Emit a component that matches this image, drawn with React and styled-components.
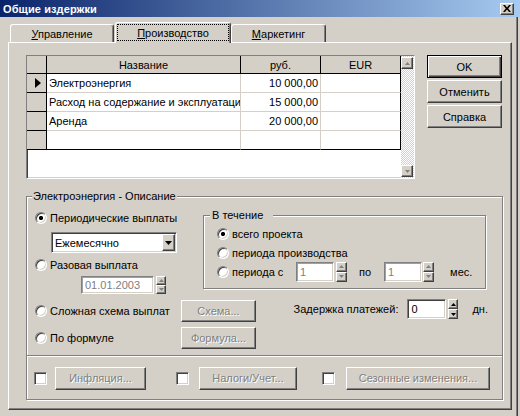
import React from "react";
import styled, { createGlobalStyle, css } from "styled-components";

const FACE = "#D4D0C8";

const GlobalStyle = createGlobalStyle`
  *, *::before, *::after { box-sizing: border-box; }
  html, body { margin: 0; padding: 0; background: ${FACE}; }
  body {
    font-family: "Liberation Sans", Arial, sans-serif;
    font-size: 11px;
    color: #000;
  }
`;

const raised = css`
  border: 1px solid;
  border-color: #fff #404040 #404040 #fff;
  box-shadow: inset -1px -1px 0 #808080;
  background: ${FACE};
`;

const sunken = css`
  border: 1px solid;
  border-color: #808080 #fff #fff #808080;
  box-shadow: inset 1px 1px 0 #404040, inset -1px -1px 0 ${FACE};
`;

const etched = css`
  border: 1px solid #808080;
  box-shadow: inset 1px 1px 0 #fff, 1px 1px 0 #fff;
`;

const Screen = styled.div`
  width: 520px;
  height: 416px;
  overflow: hidden;
  background: ${FACE};
`;

const TitleBar = styled.div`
  height: 17px;
  display: flex;
  align-items: center;
  justify-content: space-between;
  padding: 0 6px 0 3px;
  background: linear-gradient(to right, #0a246a, #a6caf0);
`;

const TitleText = styled.span`
  color: #fff;
  font-weight: bold;
  font-size: 11px;
  letter-spacing: 0.1px;
`;

const CloseButton = styled.div`
  width: 14px;
  height: 12px;
  ${raised};
  display: flex;
  align-items: center;
  justify-content: center;
`;

const WindowBody = styled.div`
  width: 518px;
  height: 399px;
  border-right: 1px solid #404040;
  box-shadow: inset -1px 0 0 #808080;
  padding: 0 5px 0 8px;
`;

const TabStrip = styled.div`
  height: 25px;
  display: flex;
  align-items: flex-end;
`;

const Tab = styled.div`
  flex: none;
  position: relative;
  width: ${(p) => p.$w}px;
  margin-left: ${(p) => p.$ml || 0}px;
  background: ${FACE};
  border: 1px solid;
  border-bottom: none;
  border-color: #fff #404040 #fff #fff;
  border-radius: 3px 3px 0 0;
  box-shadow: inset -1px 0 0 #808080;
  text-align: center;
  line-height: 13px;
  ${(p) =>
    p.$active
      ? css`
          height: 21px;
          margin-bottom: -1px;
          z-index: 1;
          padding: 1px 1px 2px 1px;
          display: flex;
        `
      : css`
          height: 18px;
          padding-top: 3px;
        `}
`;

const FocusRect = styled.div`
  flex: 1;
  border: 1px dotted #000;
  padding-top: 2px;
  text-align: center;
`;

const TabPage = styled.div`
  width: 504px;
  height: 368px;
  border: 1px solid;
  border-color: #fff #404040 #404040 #fff;
  box-shadow: inset -1px -1px 0 #808080;
  padding: 12px 0 0 17px;
  display: flex;
  flex-direction: column;
`;

const TopRow = styled.div`
  display: flex;
  gap: 12px;
  height: 124px;
`;

const GridFrame = styled.div`
  width: 389px;
  height: 124px;
  ${sunken};
  background: #fff;
  display: flex;
`;

const Cells = styled.div`
  width: 374px;
  display: grid;
  grid-template-columns: 20px 194px 80px 80px;
  grid-template-rows: 18px repeat(4, 19px);
  align-content: start;
`;

const HeadCell = styled.div`
  background: ${FACE};
  border-right: 1px solid #000;
  border-bottom: 1px solid #000;
  display: flex;
  align-items: center;
  justify-content: center;
  padding-top: 1px;
`;

const IndicatorCell = styled.div`
  background: ${FACE};
  border-right: 1px solid #000;
  border-bottom: 1px solid #000;
  display: flex;
  align-items: center;
  padding-left: 8px;
`;

const DataCell = styled.div`
  background: #fff;
  border-right: 1px solid ${(p) => (p.$lastCol ? "#000" : FACE)};
  border-bottom: 1px solid ${(p) => (p.$lastRow ? "#000" : FACE)};
  display: flex;
  align-items: center;
  justify-content: ${(p) => (p.$right ? "flex-end" : "flex-start")};
  padding: 0 2px;
  white-space: nowrap;
  overflow: hidden;
`;

const ScrollBar = styled.div`
  width: 13px;
  padding: 1px 1px 1px 0;
  display: flex;
  flex-direction: column;
  justify-content: space-between;
  background: repeating-conic-gradient(#fff 0 25%, ${FACE} 0 50%) 0 0 / 2px 2px;
`;

const ScrollButton = styled.div`
  width: 12px;
  height: 12px;
  ${raised};
  display: flex;
  align-items: center;
  justify-content: center;
`;

const ButtonColumn = styled.div`
  display: flex;
  flex-direction: column;
  gap: 2px;
`;

const Button = styled.div`
  flex: none;
  width: ${(p) => p.$w || 75}px;
  height: ${(p) => p.$h || 23}px;
  margin-left: ${(p) => p.$ml || 0}px;
  ${raised};
  display: flex;
  align-items: center;
  justify-content: center;
  white-space: nowrap;
  ${(p) =>
    p.$default &&
    css`
      border: 1px solid #000;
      box-shadow: inset 1px 1px 0 #fff, inset -1px -1px 0 #404040,
        inset -2px -2px 0 #808080;
    `}
  ${(p) =>
    p.$disabled &&
    css`
      color: #808080;
      text-shadow: 1px 1px 0 #fff;
    `}
`;

const GroupBox = styled.div`
  position: relative;
  margin-top: 17px;
  width: ${(p) => p.$w}px;
  height: ${(p) => p.$h}px;
  ${etched};
  display: flex;
  flex-direction: column;
`;

const Legend = styled.span`
  position: absolute;
  top: -7px;
  left: ${(p) => p.$left}px;
  line-height: 13px;
  padding: 0 ${(p) => p.$padRight || 1}px 0 ${(p) => p.$padLeft || 1}px;
  background: ${FACE};
  white-space: nowrap;
`;

const DescriptionArea = styled.div`
  height: 158px;
  padding: 13px 14px 0 8px;
  display: flex;
  flex-direction: column;
`;

const RowA = styled.div`
  display: flex;
  align-items: flex-start;
`;

const LeftStack = styled.div`
  width: 168px;
  flex: none;
  display: flex;
  flex-direction: column;
  align-items: flex-start;
`;

const RadioRow = styled.div`
  display: flex;
  align-items: center;
  gap: 3px;
  height: ${(p) => p.$h || 16}px;
  margin-top: ${(p) => p.$mt || 0}px;
  white-space: nowrap;
`;

const Radio = styled.span`
  flex: none;
  width: 12px;
  height: 12px;
  border-radius: 50%;
  border: 1px solid;
  border-color: #808080 #fff #fff #808080;
  box-shadow: inset 1px 1px 0 #404040, inset -1px -1px 0 ${FACE};
  background: ${(p) =>
    p.$checked
      ? "radial-gradient(circle, #000 0 1.8px, #fff 2.4px)"
      : "#fff"};
`;

const Combo = styled.div`
  margin: 6px 0 0 16px;
  width: 126px;
  height: 21px;
  ${sunken};
  background: #fff;
  display: flex;
  align-items: center;
  padding-left: 3px;
`;

const ComboButton = styled.div`
  margin-left: auto;
  margin-right: 1px;
  width: 13px;
  height: 17px;
  ${raised};
  display: flex;
  align-items: center;
  justify-content: center;
`;

const FieldRow = styled.div`
  display: flex;
  align-items: center;
  margin: ${(p) => p.$m || "0"};
  height: ${(p) => p.$h || 18}px;
`;

const Field = styled.div`
  flex: none;
  width: ${(p) => p.$w}px;
  height: ${(p) => p.$h || 20}px;
  margin-left: ${(p) => p.$ml || 0}px;
  ${sunken};
  background: #fff;
  display: flex;
  align-items: center;
  padding-left: 3px;
  color: ${(p) => (p.$disabled ? "#808080" : "#000")};
  ${(p) =>
    p.$disabled &&
    css`
      box-shadow: inset 1px 1px 0 #a0a0a0, inset -1px -1px 0 ${FACE};
    `}
`;

const SpinBox = styled.div`
  flex: none;
  width: ${(p) => p.$w}px;
  height: ${(p) => p.$h}px;
  margin-left: ${(p) => p.$ml || 0}px;
  display: flex;
  flex-direction: column;
`;

const SpinHalf = styled.div`
  flex: 1;
  ${raised};
  display: flex;
  align-items: center;
  justify-content: center;
`;

const InnerGroup = styled.div`
  position: relative;
  flex: none;
  margin-top: 5px;
  width: 283px;
  height: 74px;
  ${etched};
  padding: 8px 0 0 13px;
  display: flex;
  flex-direction: column;
`;

const InnerRow = styled.div`
  display: flex;
  align-items: center;
  height: 19px;
  white-space: nowrap;
`;

const RadioLabel = styled.span`
  margin-left: 3px;
  ${(p) =>
    p.$w &&
    css`
      width: ${p.$w}px;
      flex: none;
    `}
`;

const Text = styled.span`
  flex: none;
  margin-left: ${(p) => p.$ml || 0}px;
  white-space: nowrap;
`;

const RowB = styled.div`
  display: flex;
  align-items: flex-start;
  margin-top: 6px;
`;

const LeftB = styled.div`
  width: 221px;
  flex: none;
  display: flex;
  flex-direction: column;
  gap: 5px;
`;

const ActionRow = styled.div`
  display: flex;
  align-items: center;
  justify-content: space-between;
  height: 22px;
`;

const RightB = styled.div`
  flex: 1;
  display: flex;
  align-items: center;
  justify-content: flex-end;
  height: 20px;
  margin-top: -1px;
`;

const BottomSection = styled.div`
  flex: 1;
  border-top: 1px solid #808080;
  box-shadow: inset 0 1px 0 #fff;
  display: flex;
  align-items: center;
  padding: 1px 0 0 7px;
`;

const Checkbox = styled.span`
  flex: none;
  width: 13px;
  height: 13px;
  margin-left: ${(p) => p.$ml || 0}px;
  border: 1px solid;
  border-color: #808080 #fff #fff #808080;
  box-shadow: inset 1px 1px 0 #404040, inset -1px -1px 0 ${FACE};
  background: #fff;
`;

const Arrow = ({ dir = "down", color = "#000", w = 5, h = 3 }) => {
  const pts = dir === "down" ? `0,0 ${w},0 ${w / 2},${h}` : `0,${h} ${w},${h} ${w / 2},0`;
  return (
    <svg width={w} height={h} viewBox={`0 0 ${w} ${h}`} aria-hidden="true">
      <polygon points={pts} fill={color} />
    </svg>
  );
};

const CloseGlyph = () => (
  <svg width="8" height="7" viewBox="0 0 8 7" aria-hidden="true">
    <path d="M0 0H2L4 2.4L6 0H8L5.2 3.5L8 7H6L4 4.6L2 7H0L2.8 3.5Z" fill="#000" />
  </svg>
);

const RowPointer = () => (
  <svg width="6" height="10" viewBox="0 0 6 10" aria-hidden="true">
    <polygon points="0,0 6,5 0,10" fill="#000" />
  </svg>
);

const Spinner = ({ w, h, ml, disabled }) => (
  <SpinBox $w={w} $h={h} $ml={ml}>
    <SpinHalf>
      <Arrow dir="up" color={disabled ? "#808080" : "#000"} />
    </SpinHalf>
    <SpinHalf>
      <Arrow dir="down" color={disabled ? "#808080" : "#000"} />
    </SpinHalf>
  </SpinBox>
);

const rows = [
  { name: "Электроэнергия", rub: "10 000,00", current: true },
  { name: "Расход на содержание и эксплуатацию", rub: "15 000,00" },
  { name: "Аренда", rub: "20 000,00" },
  { name: "", rub: "" },
];

export default function App() {
  return (
    <>
      <GlobalStyle />
      <Screen>
        <TitleBar>
          <TitleText>Общие издержки</TitleText>
          <CloseButton>
            <CloseGlyph />
          </CloseButton>
        </TitleBar>
        <WindowBody>
          <TabStrip>
            <Tab $w={104} $ml={2}>
              <u>У</u>правление
            </Tab>
            <Tab $active $w={116} $ml={1}>
              <FocusRect>
                <u>П</u>роизводство
              </FocusRect>
            </Tab>
            <Tab $w={95}>
              <u>М</u>аркетинг
            </Tab>
          </TabStrip>
          <TabPage>
            <TopRow>
              <GridFrame>
                <Cells>
                  <HeadCell />
                  <HeadCell>Название</HeadCell>
                  <HeadCell>руб.</HeadCell>
                  <HeadCell>EUR</HeadCell>
                  {rows.map((r, i) => {
                    const last = i === rows.length - 1;
                    return (
                      <React.Fragment key={i}>
                        <IndicatorCell>{r.current && <RowPointer />}</IndicatorCell>
                        <DataCell $lastRow={last}>{r.name}</DataCell>
                        <DataCell $lastRow={last} $right>
                          {r.rub}
                        </DataCell>
                        <DataCell $lastRow={last} $lastCol />
                      </React.Fragment>
                    );
                  })}
                </Cells>
                <ScrollBar>
                  <ScrollButton>
                    <Arrow dir="up" color="#808080" />
                  </ScrollButton>
                  <ScrollButton>
                    <Arrow dir="down" color="#808080" />
                  </ScrollButton>
                </ScrollBar>
              </GridFrame>
              <ButtonColumn>
                <Button $default>OK</Button>
                <Button>Отменить</Button>
                <Button>Справка</Button>
              </ButtonColumn>
            </TopRow>

            <GroupBox $w={477} $h={204}>
              <Legend $left={5}>Электроэнергия - Описание</Legend>
              <DescriptionArea>
                <RowA>
                  <LeftStack>
                    <RadioRow>
                      <Radio $checked />
                      Периодические выплаты
                    </RadioRow>
                    <Combo>
                      Ежемесячно
                      <ComboButton>
                        <Arrow dir="down" w={7} h={4} />
                      </ComboButton>
                    </Combo>
                    <RadioRow $mt={4}>
                      <Radio />
                      Разовая выплата
                    </RadioRow>
                    <FieldRow $m="3px 0 0 46px" $h={18}>
                      <Field $w={73} $h={18} $disabled>
                        01.01.2003
                      </Field>
                      <Spinner w={10} h={18} ml={2} disabled />
                    </FieldRow>
                  </LeftStack>
                  <InnerGroup>
                    <Legend $left={6} $padLeft={2} $padRight={10}>
                      В течение
                    </Legend>
                    <InnerRow>
                      <Radio $checked />
                      <RadioLabel>всего проекта</RadioLabel>
                    </InnerRow>
                    <InnerRow>
                      <Radio />
                      <RadioLabel>периода производства</RadioLabel>
                    </InnerRow>
                    <InnerRow>
                      <Radio />
                      <RadioLabel $w={64}>периода с</RadioLabel>
                      <Field $w={38} $h={20} $disabled>
                        1
                      </Field>
                      <Spinner w={11} h={20} ml={2} disabled />
                      <Text $ml={12}>по</Text>
                      <Field $w={38} $h={20} $ml={13} $disabled>
                        1
                      </Field>
                      <Spinner w={11} h={20} ml={1} disabled />
                      <Text $ml={16}>мес.</Text>
                    </InnerRow>
                  </InnerGroup>
                </RowA>
                <RowB>
                  <LeftB>
                    <ActionRow>
                      <RadioRow>
                        <Radio />
                        Сложная схема выплат
                      </RadioRow>
                      <Button $h={22} $disabled>
                        Схема...
                      </Button>
                    </ActionRow>
                    <ActionRow>
                      <RadioRow>
                        <Radio />
                        По формуле
                      </RadioRow>
                      <Button $h={22} $disabled>
                        Формула...
                      </Button>
                    </ActionRow>
                  </LeftB>
                  <RightB>
                    <Text>Задержка платежей:</Text>
                    <Field $w={39} $h={20} $ml={9}>
                      0
                    </Field>
                    <Spinner w={10} h={20} ml={2} />
                    <Text $ml={14}>дн.</Text>
                  </RightB>
                </RowB>
              </DescriptionArea>
              <BottomSection>
                <Checkbox />
                <Button $w={91} $ml={8} $disabled>
                  Инфляция...
                </Button>
                <Checkbox $ml={30} />
                <Button $w={98} $ml={10} $disabled>
                  Налоги/Учет...
                </Button>
                <Checkbox $ml={25} />
                <Button $w={144} $ml={11} $disabled>
                  Сезонные изменения...
                </Button>
              </BottomSection>
            </GroupBox>
          </TabPage>
        </WindowBody>
      </Screen>
    </>
  );
}
